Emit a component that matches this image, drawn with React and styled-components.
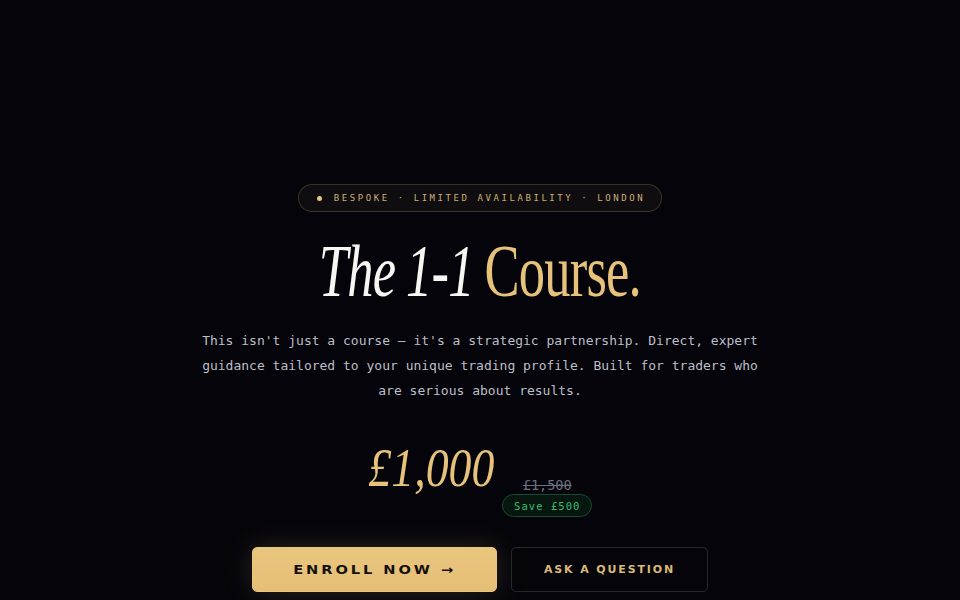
import React from "react"
import styled, { createGlobalStyle } from "styled-components"

const GlobalStyle = createGlobalStyle`
  html, body {
    margin: 0;
    padding: 0;
    background: #04040a;
  }
  body {
    font-family: "DejaVu Sans", sans-serif;
    -webkit-font-smoothing: antialiased;
  }
`

const Page = styled.main`
  min-height: 600px;
  background: #04040a;
  display: flex;
  flex-direction: column;
  align-items: center;
  padding-top: 184px;
  box-sizing: border-box;
  overflow: hidden;
`

const Badge = styled.div`
  display: inline-flex;
  align-items: center;
  gap: 12px;
  height: 28px;
  padding: 0 16px 0 18px;
  box-sizing: border-box;
  border-radius: 999px;
  border: 1px solid rgba(232, 196, 124, 0.2);
  background: rgba(232, 196, 124, 0.05);
  font-family: "DejaVu Sans Mono", monospace;
  font-size: 9px;
  letter-spacing: 0.285em;
  color: #cdb079;
`

const Dot = styled.span`
  width: 5px;
  height: 5px;
  border-radius: 50%;
  background: #e8c47c;
`

const Title = styled.h1`
  margin: 22px 0 0;
  font-family: "Liberation Serif", serif;
  font-weight: 400;
  font-size: 74px;
  line-height: 1;
  letter-spacing: -0.015em;
  word-spacing: -0.03em;
  white-space: nowrap;
  transform: scaleX(0.71);
`

const TitleItalic = styled.em`
  color: #f7f6f2;
  font-style: italic;
`

const TitleGold = styled.span`
  color: #e6c27b;
`

const Lead = styled.p`
  margin: 20px 0 0;
  max-width: 560px;
  text-align: center;
  font-family: "DejaVu Sans Mono", monospace;
  font-size: 13px;
  line-height: 25px;
  color: #bcbfc8;
`

const PriceRow = styled.div`
  margin-top: 38px;
  display: flex;
  align-items: flex-end;
  gap: 8px;
`

const Price = styled.span`
  display: inline-block;
  margin-bottom: 22px;
  margin-left: -22px;
  font-family: "Liberation Serif", serif;
  font-style: italic;
  font-size: 54px;
  line-height: 1;
  color: #e6c27b;
  transform: scaleX(0.85);
  transform-origin: right center;
`

const PriceAside = styled.div`
  display: flex;
  flex-direction: column;
  align-items: center;
  gap: 1px;
`

const OldPrice = styled.span`
  font-family: "DejaVu Sans Mono", monospace;
  font-size: 13.5px;
  line-height: 16px;
  color: #6c7080;
  text-decoration: line-through;
`

const Save = styled.span`
  display: inline-flex;
  align-items: center;
  height: 23px;
  padding: 0 11px;
  box-sizing: border-box;
  border-radius: 999px;
  border: 1px solid #1a4a31;
  background: #05170e;
  font-family: "DejaVu Sans Mono", monospace;
  font-size: 10.5px;
  letter-spacing: 0.1em;
  color: #3dbb74;
`

const Actions = styled.div`
  margin-top: 30px;
  display: flex;
  gap: 14px;
`

const Button = styled.button`
  display: flex;
  align-items: center;
  justify-content: center;
  height: 45px;
  width: ${(p) => p.$width}px;
  padding: 0;
  border-radius: 5px;
  box-sizing: border-box;
  cursor: pointer;
  font-family: "DejaVu Sans", sans-serif;
  border: 1px solid
    ${(p) => (p.$primary ? "#e8c47c" : "rgba(255, 255, 255, 0.14)")};
  background: ${(p) =>
    p.$primary ? "linear-gradient(180deg, #eac57e, #e5bf76)" : "transparent"};
  color: ${(p) => (p.$primary ? "#14110b" : "#d9ba78")};
  box-shadow: ${(p) =>
    p.$primary ? "0 0 28px rgba(232, 196, 124, 0.18)" : "none"};
`

const Label = styled.span`
  display: inline-block;
  font-size: ${(p) => (p.$wide ? 12.5 : 11)}px;
  font-weight: ${(p) => (p.$wide ? 800 : 600)};
  letter-spacing: ${(p) => (p.$wide ? "0.2em" : "0.17em")};
  transform: scaleX(${(p) => (p.$wide ? 1.17 : 1)});
`

export default function App() {
  return (
    <>
      <GlobalStyle />
      <Page>
        <Badge>
          <Dot />
          BESPOKE · LIMITED AVAILABILITY · LONDON
        </Badge>
        <Title>
          <TitleItalic>The 1-1</TitleItalic> <TitleGold>Course.</TitleGold>
        </Title>
        <Lead>
          This isn't just a course — it's a strategic partnership. Direct,
          expert guidance tailored to your unique trading profile. Built for
          traders who are serious about results.
        </Lead>
        <PriceRow>
          <Price>£1,000</Price>
          <PriceAside>
            <OldPrice>£1,500</OldPrice>
            <Save>Save £500</Save>
          </PriceAside>
        </PriceRow>
        <Actions>
          <Button $primary $width={245}>
            <Label $wide>ENROLL NOW →</Label>
          </Button>
          <Button $width={197}>
            <Label>ASK A QUESTION</Label>
          </Button>
        </Actions>
      </Page>
    </>
  )
}
